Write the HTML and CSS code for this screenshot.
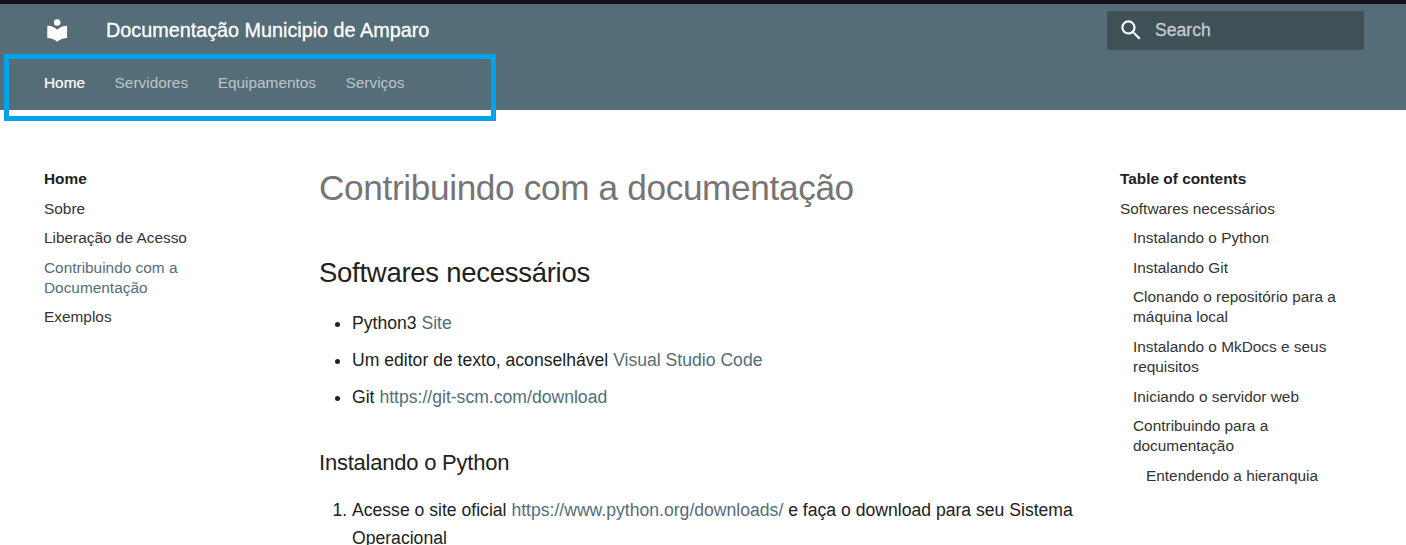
FILE: index.html
```html
<!DOCTYPE html>
<html lang="pt-BR">
<head>
<meta charset="utf-8">
<title>Documentação Municipio de Amparo</title>
<link rel="stylesheet" href="styles.css">
</head>
<body>
<header class="header">
  <div class="topbar">
    <svg class="logo" viewBox="0 0 24 24"><path d="M12 8a3 3 0 0 0 3-3 3 3 0 0 0-3-3 3 3 0 0 0-3 3 3 3 0 0 0 3 3m0 3.540C9.640 9.350 6.500 8 3 8v11c3.500 0 6.640 1.350 9 3.540 2.360-2.190 5.500-3.540 9-3.540V8c-3.500 0-6.640 1.350-9 3.540Z"/></svg>
    <span class="site-title">Documentação Municipio de Amparo</span>
    <div class="search">
      <svg class="search-icon" viewBox="0 0 24 24"><path d="M9.500 3A6.500 6.500 0 0 1 16 9.500c0 1.610-.59 3.090-1.560 4.230l.27.270h.79l5 5-1.500 1.500-5-5v-.79l-.27-.27A6.516 6.516 0 0 1 9.500 16 6.500 6.500 0 0 1 3 9.500 6.500 6.500 0 0 1 9.500 3m0 2C7 5 5 7 5 9.500S7 14 9.500 14 14 12 14 9.500 12 5 9.500 5Z"/></svg>
      <span class="search-text">Search</span>
    </div>
  </div>
  <nav class="tabs">
    <a class="tab tab-active">Home</a><a class="tab">Servidores</a><a class="tab">Equipamentos</a><a class="tab">Serviços</a>
  </nav>
  <div class="highlight"></div>
</header>
<div class="main">
  <nav class="side">
    <span class="side-title">Home</span>
    <a class="side-link">Sobre</a>
    <a class="side-link">Liberação de Acesso</a>
    <a class="side-link side-current">Contribuindo com a Documentação</a>
    <a class="side-link">Exemplos</a>
  </nav>
  <main class="content">
    <h1 class="h1">Contribuindo com a documentação</h1>
    <h2 class="h2">Softwares necessários</h2>
    <ul class="list">
      <li class="item">Python3 <a class="link">Site</a></li>
      <li class="item">Um editor de texto, aconselhável <a class="link">Visual Studio Code</a></li>
      <li class="item">Git <a class="link">https://git-scm.com/download</a></li>
    </ul>
    <h3 class="h3">Instalando o Python</h3>
    <ol class="list">
      <li class="item">Acesse o site oficial <a class="link">https://www.python.org/downloads/</a> e faça o download para seu Sistema Operacional</li>
    </ol>
  </main>
  <nav class="side toc">
    <span class="side-title">Table of contents</span>
    <a class="side-link">Softwares necessários</a>
    <a class="side-link level-2">Instalando o Python</a>
    <a class="side-link level-2">Instalando Git</a>
    <a class="side-link level-2">Clonando o repositório para a máquina local</a>
    <a class="side-link level-2">Instalando o MkDocs e seus requisitos</a>
    <a class="side-link level-2">Iniciando o servidor web</a>
    <a class="side-link level-2">Contribuindo para a documentação</a>
    <a class="side-link level-3">Entendendo a hieranquia</a>
  </nav>
</div>
</body>
</html>
```
FILE: styles.css
```css
* { box-sizing: border-box; }
body {
  margin: 0;
  height: 545px;
  overflow: hidden;
  background: #fff;
  color: #212121;
  font-family: "Liberation Sans", Arial, sans-serif;
  font-size: 17.6px;
}
.header {
  position: relative;
  height: 110px;
  border-top: 4px solid #15101a;
  background: #546d78;
  color: #fff;
}
.topbar {
  display: flex;
  align-items: center;
  height: 53px;
  padding: 0 42px 0 44px;
}
.logo { width: 26.4px; height: 26.4px; fill: currentColor; }
.site-title {
  margin-left: 35.6px;
  font-size: 19.8px;
  -webkit-text-stroke: 0.3px currentColor;
}
.search {
  display: flex;
  align-items: center;
  width: 257px;
  height: 39px;
  margin-left: auto;
  padding-left: 11px;
  border-radius: 2px;
  background: #3f5057;
}
.search-icon { width: 26.4px; height: 26.4px; fill: #fff; }
.search-text {
  margin-left: 10.6px;
  color: #c5cbcd;
  font-size: 17.6px;
  -webkit-text-stroke: 0.3px currentColor;
}
.tabs {
  display: flex;
  gap: 29.5px;
  padding: 17px 44px 0;
  font-size: 15.4px;
  line-height: 18px;
}
.tab { color: #bbc5c9; }
.tab-active { color: #fff; -webkit-text-stroke: 0.2px currentColor; }
.highlight {
  position: absolute;
  left: 4px;
  top: 50px;
  width: 492px;
  height: 67px;
  border: 5px solid #00a2e8;
}
.main {
  display: grid;
  grid-template-columns: 276px 801px 260px;
  padding-left: 44px;
}
.side {
  display: flex;
  flex-direction: column;
  gap: 9.6px;
  width: 190px;
  padding-top: 59px;
  font-size: 15.4px;
  line-height: 20px;
}
.side-title { font-weight: 700; }
.side-link { color: #333; }
.side-current { color: #546d78; }
.toc { width: 240px; margin-left: -1px; }
.level-2 { padding-left: 13px; }
.level-3 { padding-left: 26px; }
.content { padding: 55px 36px 0 0; margin-left: -1px; }
.h1,
.h2,
.h3 {
  font-weight: 400;
  letter-spacing: -0.01em;
}
.h1 {
  margin: 0;
  color: #757575;
  font-size: 35.2px;
  line-height: 46px;
}
.h2 {
  margin: 43px 0 17px;
  font-size: 27.5px;
  line-height: 38px;
}
.h3 {
  margin: 35px 0 17px;
  font-size: 22px;
  line-height: 33px;
}
.list { margin: 0; padding-left: 33px; }
.item { margin-bottom: 8.8px; line-height: 28.16px; }
.link { color: #546d78; }
```
